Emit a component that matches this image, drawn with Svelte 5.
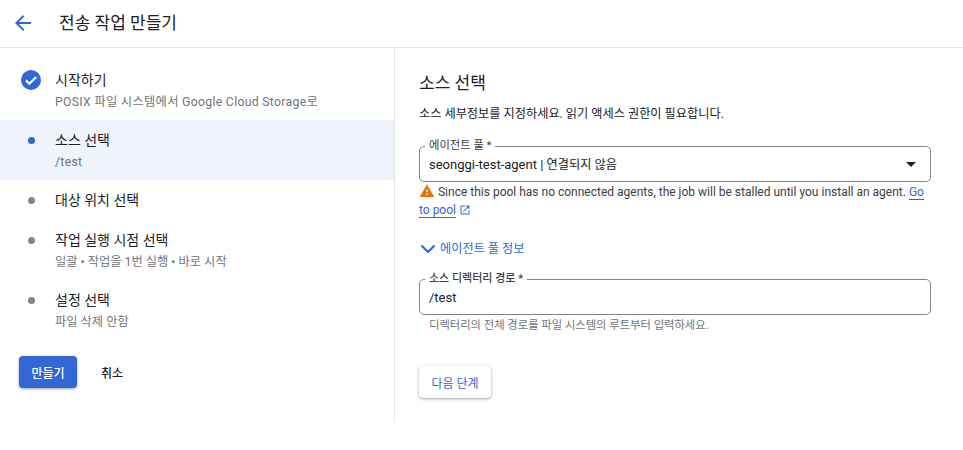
<script>
  const steps = [
    { title: "시작하기", sub: "POSIX 파일 시스템에서 Google Cloud Storage로", state: "done", latin: true },
    { title: "소스 선택", sub: "/test", state: "active", latin: true },
    { title: "대상 위치 선택", sub: "", state: "todo" },
    { title: "작업 실행 시점 선택", sub: "일괄 • 작업을 1번 실행 • 바로 시작", state: "todo" },
    { title: "설정 선택", sub: "파일 삭제 안함", state: "todo" }
  ];
</script>

<div class="page">
  <header class="topbar">
    <svg class="back" width="24" height="24" viewBox="0 0 24 24"><path d="M20 11H7.83l5.59-5.59L12 4l-8 8 8 8 1.41-1.41L7.83 13H20v-2z" /></svg>
    <h1>전송 작업 만들기</h1>
  </header>

  <div class="body">
    <aside class="side">
      <ol class="steps">
        {#each steps as step}
          <li class="step {step.state}" class:short={!step.sub}>
            <div class="marker">
              {#if step.state === "done"}
                <svg width="24" height="24" viewBox="0 0 24 24"><circle cx="12" cy="12" r="10" fill="#3367d6" /><path d="M7 12.4l3.4 3.4L17.2 9" fill="none" stroke="#fff" stroke-width="2.2" /></svg>
              {:else}
                <span class="dot"></span>
              {/if}
            </div>
            <div class="text">
              <div class="title">{step.title}</div>
              {#if step.sub}<div class="sub" class:latin={step.latin}>{step.sub}</div>{/if}
            </div>
          </li>
        {/each}
      </ol>
      <div class="actions">
        <button class="primary">만들기</button>
        <button class="plain">취소</button>
      </div>
    </aside>

    <main class="content">
      <h2>소스 선택</h2>
      <p class="desc">소스 세부정보를 지정하세요. 읽기 액세스 권한이 필요합니다.</p>

      <div class="field">
        <span class="label">에이전트 풀 *</span>
        <span class="value">seonggi-test-agent | <span class="ko">연결되지 않음</span></span>
        <span class="caret"></span>
      </div>
      <p class="warn">
        <svg class="warn-icon" width="16" height="16" viewBox="0 0 24 24"><path d="M1 21h22L12 2 1 21z" fill="#e8710a" /><path d="M13 18h-2v-2h2v2zm0-4h-2v-4h2v4z" fill="#fff" /></svg>
        Since this pool has no connected agents, the job will be stalled until you install an agent. <a href="#pool">Go to pool</a>
        <svg class="ext" width="12" height="12" viewBox="0 0 24 24"><path d="M19 19H5V5h7V3H5a2 2 0 0 0-2 2v14a2 2 0 0 0 2 2h14a2 2 0 0 0 2-2v-7h-2v7zM14 3v2h3.59l-9.83 9.83 1.41 1.41L19 6.41V10h2V3h-7z" /></svg>
      </p>

      <div class="toggle">
        <svg width="18" height="18" viewBox="0 0 18 18"><path d="M2.5 5.5L9 12l6.5-6.5" fill="none" stroke="#3367d6" stroke-width="2.2" /></svg>
        <span>에이전트 풀 정보</span>
      </div>

      <div class="field path">
        <span class="label">소스 디렉터리 경로 *</span>
        <span class="value">/test</span>
      </div>
      <p class="hint">디렉터리의 전체 경로를 파일 시스템의 루트부터 입력하세요.</p>

      <button class="next">다음 단계</button>
    </main>
  </div>
</div>

<style>
  :global(body) {
    background: #fff;
  }
  .page {
    width: 963px;
    height: 450px;
    overflow: hidden;
    font-family: Roboto, "Noto Sans CJK KR", sans-serif;
    color: #202124;
  }
  .topbar {
    display: flex;
    align-items: center;
    height: 45px;
    padding: 0 0 2px 11px;
    border-bottom: 1px solid #e4e5e7;
  }
  .back {
    fill: #3367d6;
  }
  h1 {
    margin: 0 0 2px 24px;
    font-size: 17px;
    font-weight: 400;
  }
  .body {
    display: flex;
  }
  .side {
    flex: none;
    width: 395px;
    height: 374px;
    padding-top: 12px;
    box-sizing: border-box;
    border-right: 1px solid #e4e5e7;
  }
  .steps {
    list-style: none;
    margin: 0;
    padding: 0;
  }
  .step {
    display: flex;
    height: 60px;
  }
  .step.short {
    height: 40px;
  }
  .step.active {
    background: #eff3fc;
  }
  .marker {
    width: 24px;
    height: 24px;
    margin: 8px 0 0 19px;
    display: flex;
    align-items: center;
    justify-content: center;
  }
  .dot {
    width: 7px;
    height: 7px;
    border-radius: 50%;
    background: #80868b;
  }
  .active .dot {
    background: #3367d6;
  }
  .text {
    margin: 10px 0 0 12px;
  }
  .title {
    font-size: 14px;
    line-height: 20px;
    color: #202124;
  }
  .sub {
    margin-top: 3px;
    font-size: 12.25px;
    line-height: 18px;
    color: #70757a;
  }
  .sub.latin {
    letter-spacing: 0.3px;
  }
  .actions {
    display: flex;
    align-items: center;
    margin: 16px 0 0 19px;
  }
  button {
    font-family: inherit;
    border: 0;
    cursor: pointer;
  }
  .primary {
    width: 58px;
    height: 32px;
    border-radius: 4px;
    background: #3367d6;
    color: #fff;
    font-size: 12px;
    font-weight: 500;
    box-shadow: 0 1px 3px rgba(60, 64, 67, 0.5);
  }
  .plain {
    margin-left: 8px;
    width: 54px;
    height: 32px;
    background: none;
    color: #202124;
    font-size: 12px;
    font-weight: 500;
  }
  .content {
    flex: 1;
    padding: 23px 32px 0 24px;
  }
  h2 {
    margin: 0;
    font-size: 17px;
    line-height: 24px;
    font-weight: 400;
  }
  .desc {
    margin: 9px 0 0;
    font-size: 12.2px;
    line-height: 20px;
    color: #202124;
  }
  .field {
    position: relative;
    display: flex;
    align-items: center;
    height: 34px;
    margin-top: 22px;
    padding: 0 9px;
    border: 1px solid #80868b;
    border-radius: 5px;
  }
  .label {
    position: absolute;
    top: -8px;
    left: 5px;
    padding: 0 4px;
    background: #fff;
    font-size: 11.3px;
    line-height: 14px;
    color: #3c4043;
  }
  .path .label {
    font-size: 11px;
    font-weight: 500;
  }
  .value {
    font-size: 13px;
    color: #202124;
  }
  .ko {
    font-size: 12.2px;
  }
  .caret {
    margin-left: auto;
    margin-right: 5px;
    border-left: 5px solid transparent;
    border-right: 5px solid transparent;
    border-top: 5px solid #202124;
  }
  .warn {
    margin: 1px 0 0;
    font-size: 12px;
    line-height: 18px;
    color: #3c4043;
  }
  .warn-icon {
    vertical-align: -3px;
  }
  a {
    color: #3367d6;
    text-decoration: none;
    border-bottom: 1px solid #3367d6;
  }
  .ext {
    fill: #3367d6;
    vertical-align: -2px;
  }
  .toggle {
    display: flex;
    align-items: center;
    gap: 3px;
    margin-top: 21px;
    font-size: 12.2px;
    line-height: 18px;
    color: #3367d6;
  }
  .path {
    margin-top: 21px;
  }
  .hint {
    margin: 3px 0 0 10px;
    font-size: 11.3px;
    line-height: 16px;
    color: #70757a;
  }
  .next {
    display: block;
    margin-top: 32px;
    width: 72px;
    height: 32px;
    border-radius: 4px;
    background: #fff;
    color: #3367d6;
    font-size: 12px;
    box-shadow: 0 1px 3px rgba(60, 64, 67, 0.5);
  }
</style>
